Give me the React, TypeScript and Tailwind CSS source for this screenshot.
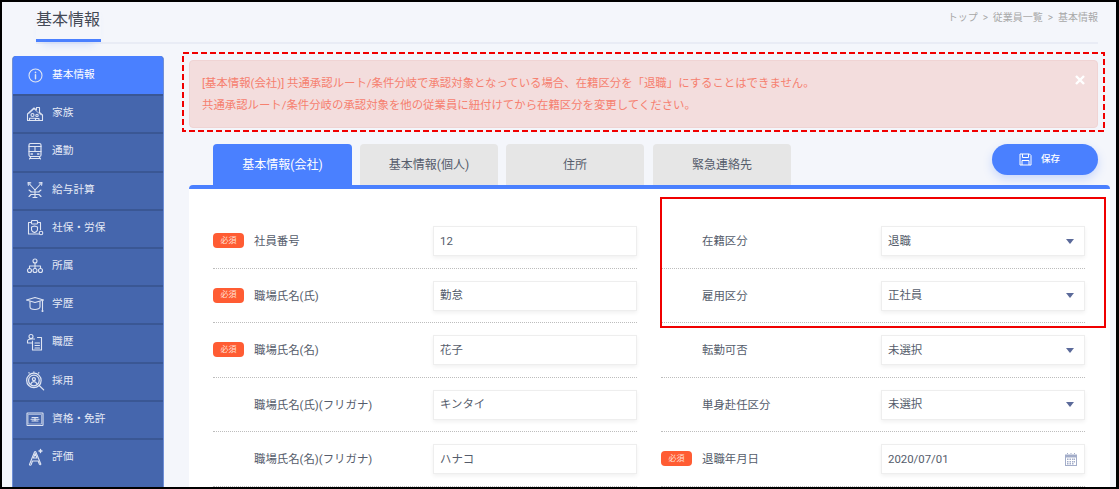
// App.tsx
// 基本情報 page with annotated alert and form

const ic = { fill: 'none', stroke: 'currentColor', strokeWidth: 1.1, strokeLinecap: 'round', strokeLinejoin: 'round' } as const;

function Svg({ children, size = 18 }: { children: React.ReactNode; size?: number }) {
    return (
        <svg width={size} height={size} viewBox="0 0 18 18" {...ic}>
            {children}
        </svg>
    );
}

const icons: React.ReactNode[] = [
    <Svg key="info" size={15}>
        <circle cx="9" cy="9" r="7.800" strokeWidth="1.300" />
        <path d="M9 8v5" strokeWidth="1.700" />
        <circle cx="9" cy="5.300" r="1" fill="currentColor" stroke="none" />
    </Svg>,
    <Svg key="home">
        <path d="M1.500 16.500V10L8 4l2.500 2V3.500h3v5l3 2.500v5.500z" />
        <path d="M3 9.500l5-4.500 7 6" strokeWidth="0.700" />
        <circle cx="6.500" cy="11" r="1.500" />
        <circle cx="11" cy="11.500" r="1.200" />
        <path d="M3.500 16.500v-2.300h6v2.300M9.500 14.500h3.500v2" />
    </Svg>,
    <Svg key="train">
        <path d="M4.500 1.500h9c.8 0 1.500.7 1.500 1.500v10c0 .8-.7 1.500-1.500 1.500h-9C3.700 14.500 3 13.800 3 13V3c0-.8.700-1.500 1.500-1.500z" strokeWidth="1.200" />
        <path d="M3 4.500h12M3 9.500h12M9 4.500v5M5 14.500l-1.500 2.500M13 14.500l1.500 2.500M3.500 16.500h11" />
        <path d="M5 12h1.500M11.500 12H13" strokeWidth="1.300" />
    </Svg>,
    <Svg key="yen">
        <path d="M3 2.500l6 6.500 6-6.500" />
        <path d="M2 1.500l2.800.4M2 1.500l.4 2.800M16 1.500l-2.800.4M16 1.500l-.4 2.800" />
        <path d="M9 9v7.500M5 11h8M5 13.500h8M7 16.500h4M3 9l2.500 2M15 9l-2.500 2M3 15.500l2-2M15 15.500l-2-2" />
    </Svg>,
    <Svg key="shield">
        <path d="M12.500 15H2.500V3.500h3M11.500 3.500h3v7" />
        <rect x="5.500" y="1.500" width="6" height="3.500" rx="0.800" />
        <path d="M8.500 7l3 1v2.500c0 1.500-1.500 2.500-3 3-1.500-.5-3-1.500-3-3V8z" />
        <circle cx="15" cy="14" r="1.800" />
    </Svg>,
    <Svg key="org">
        <circle cx="9" cy="4" r="2" />
        <circle cx="3.500" cy="13.500" r="2" />
        <circle cx="9" cy="13.500" r="2" />
        <circle cx="14.500" cy="13.500" r="2" />
        <path d="M9 6v5.500M3.500 11.500V9h11v2.500" />
    </Svg>,
    <Svg key="cap">
        <path d="M.500 5L9 2.500 17.500 5 9 7.500z" />
        <path d="M4 6.500V12c0 1.500 2.500 2.500 5 2.500s5-1 5-2.500V6.500" />
        <path d="M16.500 5.500v9" />
        <circle cx="16.500" cy="16" r="0.500" fill="currentColor" />
    </Svg>,
    <Svg key="career">
        <circle cx="5" cy="3.500" r="2" />
        <path d="M1.500 10V8.500c0-1.500 1.500-2.500 3.500-2.500h3.500M1.500 10h5" />
        <path d="M6.500 8v9h9V4.500h-4" />
        <path d="M9 10h4.500M9 12.500h4.500M9 15h4.500" />
    </Svg>,
    <Svg key="search" size={20}>
        <circle cx="8" cy="8.500" r="6.500" />
        <circle cx="8" cy="8.500" r="4.800" />
        <circle cx="8" cy="7.300" r="1.400" />
        <path d="M5.300 11.500c.5-1.500 1.500-2 2.700-2s2.200.5 2.700 2M12.800 13l4 4M8 .8v.4M3.500 1.500l.3.4M12.500 1.500l-.3.4" />
    </Svg>,
    <Svg key="cert">
        <rect x="1" y="3" width="16" height="12.500" rx="0.500" />
        <rect x="2.500" y="4.500" width="13" height="9.500" strokeWidth="0.600" />
        <path d="M5 9.300h8M6 7.500h6M6 11h6M9 7.500v3.500" />
    </Svg>,
    <Svg key="eval">
        <path d="M3.500 16.500L8.500 4c.3-.6 1-.6 1.300 0l5 12c.2.800-1 1-1.400.3l-1.200-3.300H6.500l-1.400 3.800c-.4.700-1.800.5-1.600-.3z" />
        <path d="M7.400 10H11L9.200 5.500z" />
        <path d="M14.500 1.500v3M13 3h3" strokeWidth="1.400" />
    </Svg>,
];

const menu = ['基本情報', '家族', '通勤', '給与計算', '社保・労保', '所属', '学歴', '職歴', '採用', '資格・免許', '評価'];

const leftRows = [
    { label: '社員番号', value: '12', required: true },
    { label: '職場氏名(氏)', value: '勤怠', required: true },
    { label: '職場氏名(名)', value: '花子', required: true },
    { label: '職場氏名(氏)(フリガナ)', value: 'キンタイ' },
    { label: '職場氏名(名)(フリガナ)', value: 'ハナコ' },
];

const rightRows = [
    { label: '在籍区分', value: '退職', kind: 'select' },
    { label: '雇用区分', value: '正社員', kind: 'select' },
    { label: '転勤可否', value: '未選択', kind: 'select' },
    { label: '単身赴任区分', value: '未選択', kind: 'select' },
    { label: '退職年月日', value: '2020/07/01', kind: 'date', required: true },
];

type Row = { label: string; value: string; required?: boolean; kind?: string };

function FormRow({ label, value, required, kind }: Row) {
    return (
        <div className="flex h-[54.5px] pt-3 border-b border-dotted border-[#bdbdbd]">
            <div className="w-[31px] h-[15px] mt-[7px] shrink-0">
                {required && (
                    <span className="flex h-full items-center justify-center rounded-sm bg-[#ff5c33] text-[8px] text-[#ffe0d8]">
                        必須
                    </span>
                )}
            </div>
            <span className="ml-2.5 w-[179px] text-[11.400px] leading-[31px] text-[#555c6b]">{label}</span>
            <div className="flex h-[30px] w-[204px] items-center justify-between border border-[#eeeeee] bg-white pl-[6px] pr-[9px] text-[11.400px] text-[#555c6b] shadow-[0_2px_4px_rgba(0,0,0,0.06)]">
                <span className="pt-px">{value}</span>
                {kind === 'select' && (
                    <span className="mr-px size-0 border-x-4 border-t-[5px] border-x-transparent border-t-[#5b6a9a]" />
                )}
                {kind === 'date' && (
                    <svg width="12" height="13" viewBox="0 0 12 13" className="-mr-[2px] text-[#a3adc9]" fill="currentColor">
                        <path d="M2 0h1v2H2zM5.500 0h1v2h-1zM9 0h1v2H9zM0 1.500h12V13H0zM1 4.500V12h10V4.500z" fillRule="evenodd" />
                        <path d="M2 5.500h1.500V7H2zM4.500 5.500H6V7H4.500zM7 5.500h1.500V7H7zM9 5.500h1V7H9zM2 8h1.500v1.500H2zM4.500 8H6v1.500H4.500zM7 8h1.500v1.500H7zM9 8h1v1.500H9zM2 10h1.500v1.500H2zM4.500 10H6v1.500H4.500zM7 10h1.500v1.500H7z" />
                    </svg>
                )}
            </div>
        </div>
    );
}

export default function App() {
    return (
        <div className="h-[489px] w-[1119px] overflow-hidden border-t-2 border-b-2 border-l-2 border-r-[3px] border-black bg-[#f4f6fb] font-['Roboto','Noto_Sans_CJK_JP',sans-serif]">
            {/* header */}
            <div className="ml-[34px] mr-[18px] flex h-[42px] items-start justify-between border-b-2 border-[#e9ecf5]">
                <h1 className="h-[40px] w-[65px] border-b-[3px] border-[#4a80ff] pt-[7px] text-[16px] leading-[22px] whitespace-nowrap text-[#444a55] shadow-[0_8px_10px_-6px_rgba(74,128,255,0.2)]">
                    基本情報
                </h1>
                <p className="pt-2 text-[10px] leading-[15px] text-[#a8a8a8]">
                    トップ &nbsp;&gt;&nbsp; 従業員一覧 &nbsp;&gt;&nbsp; 基本情報
                </p>
            </div>

            <div className="flex pl-2.5">
                {/* sidebar */}
                <nav className="mt-3 w-[152px] shrink-0 overflow-hidden rounded-t-sm border-x border-[#6f8fd6] bg-[#4566ad]">
                    {menu.map((name, i) => (
                        <div
                            key={name}
                            className={
                                i === 0
                                    ? 'flex h-[38.2px] items-center gap-[7px] bg-[#4a80ff] pl-[12px] text-[10.700px] text-white'
                                    : 'flex h-[38.2px] items-center gap-[7px] border-t-2 border-[#3a5794] pb-[2px] pl-[12px] text-[10.700px] text-[#e4e9f5]'
                            }
                        >
                            <span className="flex w-5 justify-center text-[#dfe5f3]">{icons[i]}</span>
                            <span>{name}</span>
                        </div>
                    ))}
                </nav>

                {/* main */}
                <main className="ml-[18px] flex-1 pr-1.5">
                    <div className="relative mt-2 h-[80px] w-[923px] px-[7px] pt-2">
                        <div className="relative h-[68px] rounded-sm border border-[#f0d4d4] bg-[#f3dddd] pl-3 pt-[11px] text-[11.400px] leading-[22px] text-[#f6806f]">
                            <p>[基本情報(会社)] 共通承認ルート/条件分岐で承認対象となっている場合、在籍区分を「退職」にすることはできません。</p>
                            <p>共通承認ルート/条件分岐の承認対象を他の従業員に紐付けてから在籍区分を変更してください。</p>
                            <svg width="10" height="10" viewBox="0 0 10 10" className="absolute right-[12px] top-[14px] text-white" fill="none" stroke="currentColor" strokeWidth="2.400">
                                <path d="M1 1l8 8M9 1l-8 8" />
                            </svg>
                        </div>
                        {/* dashed annotation */}
                        <svg className="absolute inset-0" width="923" height="80" fill="none">
                            <rect x="1" y="1" width="921" height="78" stroke="#f00000" strokeWidth="2" strokeDasharray="6 3" />
                        </svg>
                    </div>

                    <div className="mt-3 flex items-start justify-between pl-[31px] pr-3">
                        <div className="flex gap-2">
                            <div className="flex h-[41px] w-[139px] items-center justify-center rounded-t bg-[#4a80ff] text-[12px] text-white">基本情報(会社)</div>
                            <div className="flex h-[41px] w-[138px] items-center justify-center rounded-t bg-[#e6e6e6] text-[12px] text-[#555c6b]">基本情報(個人)</div>
                            <div className="flex h-[41px] w-[138px] items-center justify-center rounded-t bg-[#e6e6e6] text-[12px] text-[#555c6b]">住所</div>
                            <div className="ml-px flex h-[41px] w-[138px] items-center justify-center rounded-t bg-[#e6e6e6] text-[12px] text-[#555c6b]">緊急連絡先</div>
                        </div>
                        <button className="flex h-[31px] w-[106px] items-center justify-center gap-[9px] rounded-full bg-[#4a80ff] pr-[11px] text-[9.500px] font-medium text-white shadow-[0_4px_10px_rgba(74,128,255,0.25)]">
                            <svg width="13" height="13" viewBox="0 0 13 13" fill="none" stroke="currentColor" strokeWidth="1">
                                <path d="M1 1h9.500L12 2.500V12H1zM3.500 1v3.500h6V1M3 12V7.500h7V12" />
                            </svg>
                            保存
                        </button>
                    </div>

                    <section className="relative ml-[7px] h-[310px] rounded-t-sm border-t-4 border-[#4a80ff] bg-white pt-[25px]">
                        <div className="grid grid-cols-[424px_424px] gap-x-6 pl-6">
                            <div>
                                {leftRows.map((r) => (
                                    <FormRow key={r.label} {...r} />
                                ))}
                            </div>
                            <div>
                                {rightRows.map((r) => (
                                    <FormRow key={r.label} {...r} />
                                ))}
                            </div>
                        </div>
                        {/* annotation around 在籍区分 / 雇用区分 */}
                        <div className="absolute left-[471px] top-[8px] h-[131px] w-[446px] border-2 border-[#f00000]" />
                    </section>
                </main>
            </div>
        </div>
    );
}
